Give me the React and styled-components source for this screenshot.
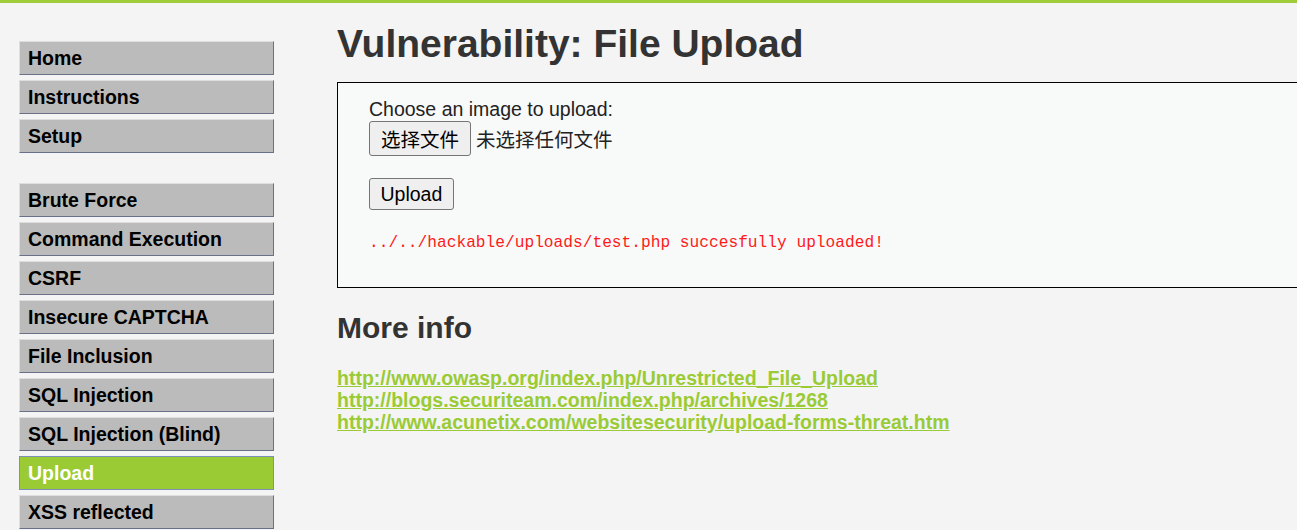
import React from "react";
import styled, { createGlobalStyle } from "styled-components";

const GlobalStyle = createGlobalStyle`
  html, body { margin: 0; padding: 0; overflow: hidden; }
  body {
    background: #f4f4f4;
    font-family: "Liberation Sans", Arial, sans-serif;
    color: #222;
  }
`;

const TopBar = styled.div`
  height: 3px;
  background: #9fcc39;
`;

const Layout = styled.div`
  display: flex;
  align-items: flex-start;
`;

const Sidebar = styled.nav`
  flex: 0 0 auto;
  width: 255px;
  padding: 38px 0 0 19px;
  margin-right: 63px;
`;

const MenuList = styled.ul`
  list-style: none;
  margin: 0 0 30px 0;
  padding: 0;
`;

const MenuItem = styled.li`
  margin: 0 0 5px 0;
`;

const MenuLink = styled.a`
  display: block;
  height: 32px;
  line-height: 32px;
  padding: 0 9px 0 8px;
  font-size: 19.5px;
  font-weight: bold;
  text-decoration: none;
  white-space: nowrap;
  color: ${(p) => (p.$selected ? "#fff" : "#000")};
  background: ${(p) => (p.$selected ? "#9acb34" : "#bbbbbb")};
  border: 1px solid;
  border-color: ${(p) =>
    p.$selected
      ? "#7d8fb8"
      : "#dedede #687187 #687187 #dedede"};
`;

const Main = styled.main`
  flex: 1 1 auto;
  min-width: 0;
  padding-top: 19px;
`;

const Title = styled.h1`
  margin: 0 0 16px 0;
  font-size: 39px;
  line-height: 44px;
  font-weight: bold;
  color: #333;
  white-space: nowrap;
`;

const VulnBox = styled.div`
  background: #f8f9f9;
  border: 1px solid #000;
  border-right: none;
  padding: 15px 0 35px 31px;
`;

const Label = styled.div`
  font-size: 19.5px;
  line-height: 22px;
  color: #222;
`;

const FileRow = styled.div`
  display: flex;
  align-items: center;
  gap: 5px;
  margin-top: 1px;
`;

const NativeButton = styled.button`
  box-sizing: border-box;
  height: ${(p) => (p.$cjk ? "35px" : "32px")};
  padding: 0 ${(p) => (p.$cjk ? "11px" : "10.5px")};
  font-family: ${(p) =>
    p.$cjk
      ? '"Noto Sans CJK SC", "Liberation Sans", sans-serif'
      : '"Liberation Sans", Arial, sans-serif'};
  font-size: 19.5px;
  color: #000;
  background: #efefef;
  border: 1px solid #767676;
  border-radius: 3px;
  cursor: default;
`;

const NoFile = styled.span`
  font-family: "Noto Sans CJK SC", "Liberation Sans", sans-serif;
  font-size: 19.5px;
  color: #222;
`;

const SubmitRow = styled.div`
  margin-top: 22px;
`;

const Message = styled.pre`
  margin: 24px 0 0 0;
  font-family: "Liberation Mono", "Courier New", monospace;
  font-size: 16.2px;
  color: #ff1a1a;
`;

const SubTitle = styled.h2`
  margin: 23px 0 22px 0;
  font-size: 30px;
  line-height: 34px;
  font-weight: bold;
  color: #333;
`;

const LinkList = styled.ul`
  list-style: none;
  margin: 0;
  padding: 0;
`;

const InfoLink = styled.a`
  display: inline-block;
  font-size: 19.5px;
  line-height: 22px;
  font-weight: bold;
  color: #9acb34;
  text-decoration: underline;
`;

const groups = [
  ["Home", "Instructions", "Setup"],
  [
    "Brute Force",
    "Command Execution",
    "CSRF",
    "Insecure CAPTCHA",
    "File Inclusion",
    "SQL Injection",
    "SQL Injection (Blind)",
    "Upload",
    "XSS reflected",
  ],
];

const links = [
  "http://www.owasp.org/index.php/Unrestricted_File_Upload",
  "http://blogs.securiteam.com/index.php/archives/1268",
  "http://www.acunetix.com/websitesecurity/upload-forms-threat.htm",
];

export default function App() {
  return (
    <>
      <GlobalStyle />
      <TopBar />
      <Layout>
        <Sidebar>
          {groups.map((g, i) => (
            <MenuList key={i}>
              {g.map((name) => (
                <MenuItem key={name}>
                  <MenuLink href="#" $selected={name === "Upload"}>
                    {name}
                  </MenuLink>
                </MenuItem>
              ))}
            </MenuList>
          ))}
        </Sidebar>
        <Main>
          <Title>Vulnerability: File Upload</Title>
          <VulnBox>
            <Label>Choose an image to upload:</Label>
            <FileRow>
              <NativeButton type="button" $cjk>
                选择文件
              </NativeButton>
              <NoFile>未选择任何文件</NoFile>
            </FileRow>
            <SubmitRow>
              <NativeButton type="button">Upload</NativeButton>
            </SubmitRow>
            <Message>../../hackable/uploads/test.php succesfully uploaded!</Message>
          </VulnBox>
          <SubTitle>More info</SubTitle>
          <LinkList>
            {links.map((l) => (
              <li key={l}>
                <InfoLink href="#">{l}</InfoLink>
              </li>
            ))}
          </LinkList>
        </Main>
      </Layout>
    </>
  );
}
